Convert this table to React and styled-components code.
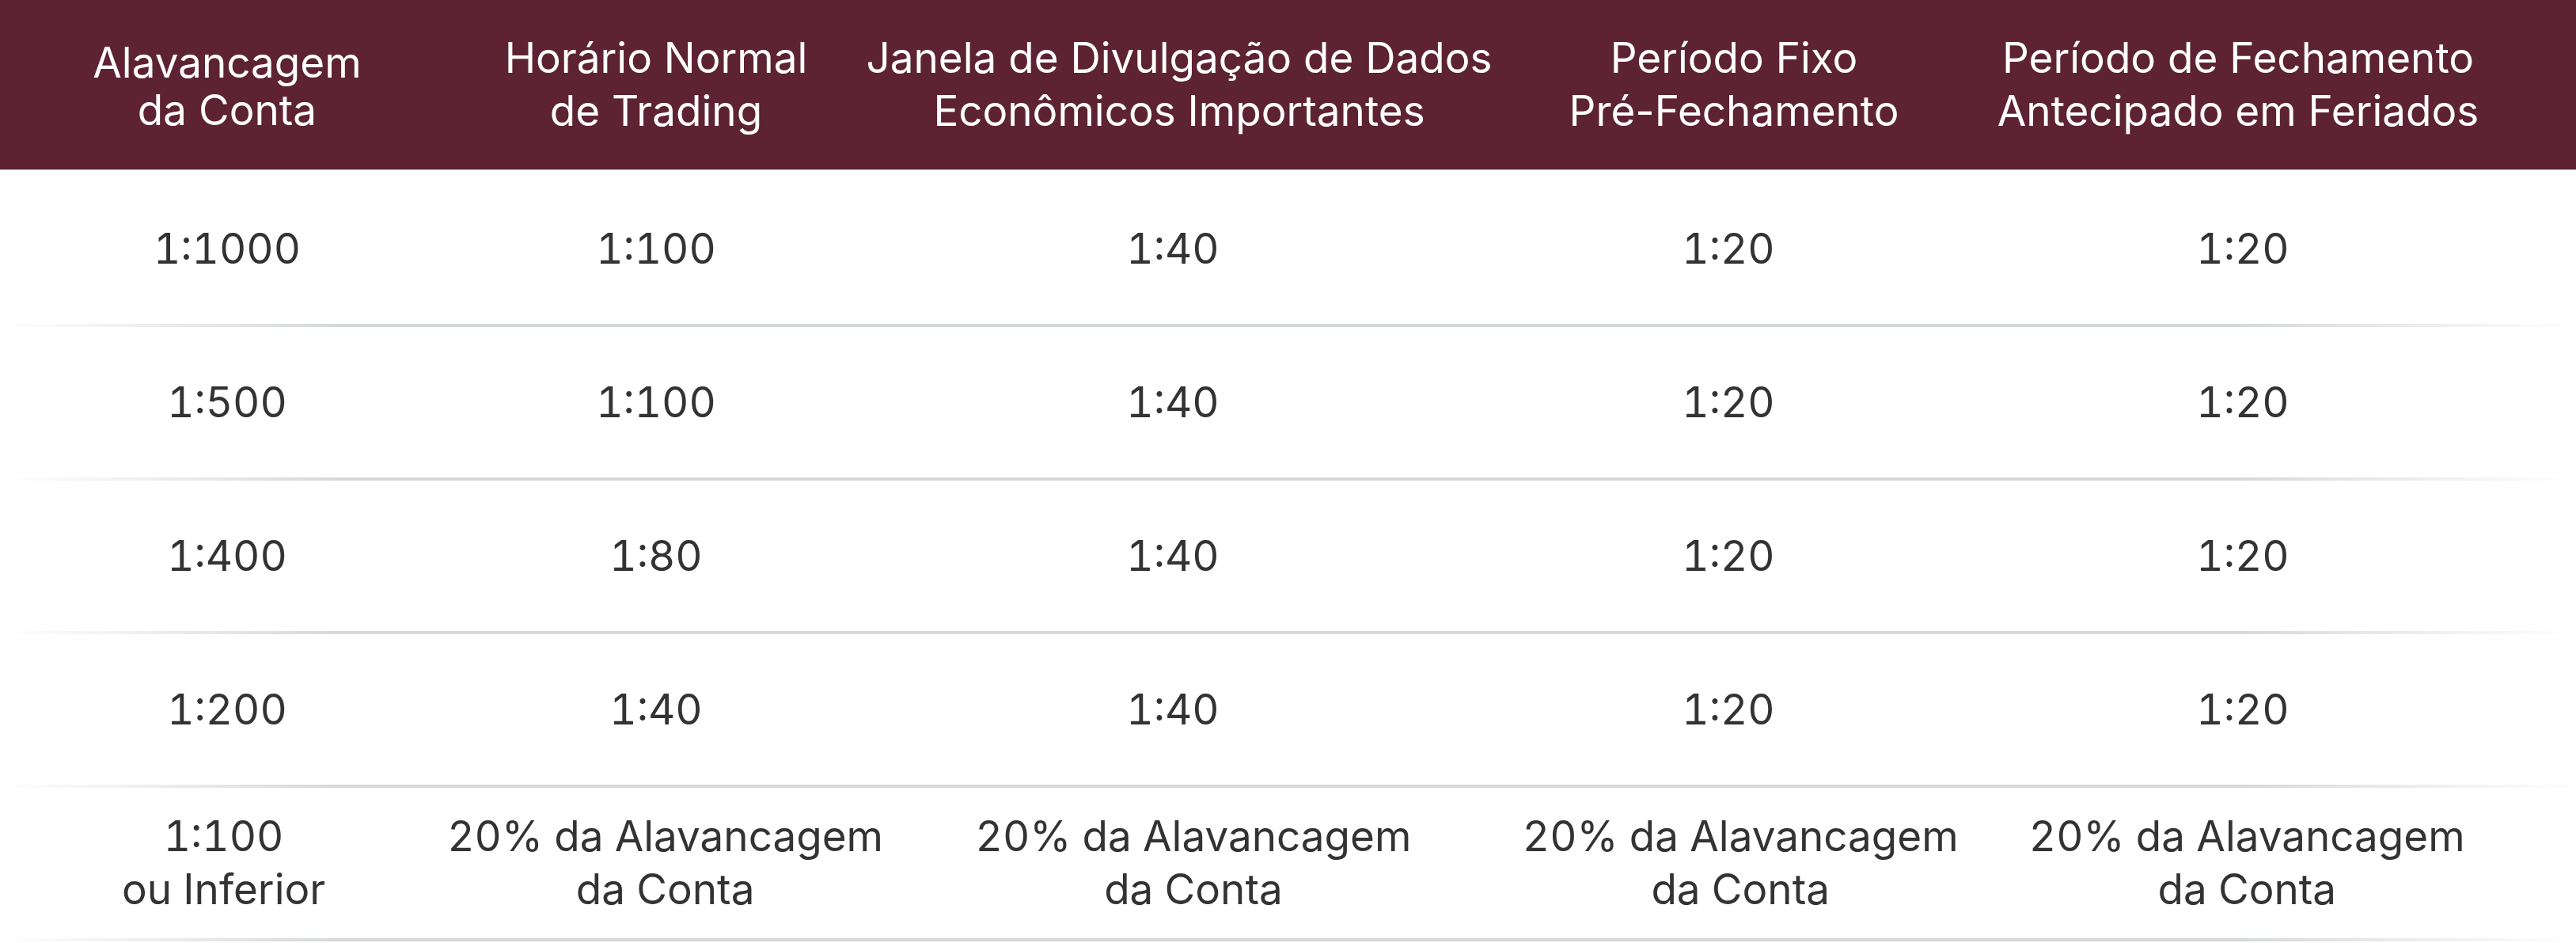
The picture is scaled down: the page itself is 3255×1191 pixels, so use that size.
import React from 'react';
import styled, { createGlobalStyle } from 'styled-components';

const GlobalStyle = createGlobalStyle`
  html, body {
    margin: 0;
    padding: 0;
    background: #ffffff;
  }
  body {
    font-family: Inter, "Noto Sans", "Liberation Sans", sans-serif;
  }
`;

const columns = [
  { title: ['Alavancagem', 'da Conta'], tight: true },
  { title: ['Horário Normal', 'de Trading'] },
  { title: ['Janela de Divulgação de Dados', 'Econômicos Importantes'] },
  { title: ['Período Fixo', 'Pré-Fechamento'] },
  { title: ['Período de Fechamento', 'Antecipado em Feriados'] },
];

const share = ['20% da Alavancagem', 'da Conta'];

const rows = [
  [['1:1000'], ['1:100'], ['1:40'], ['1:20'], ['1:20']],
  [['1:500'], ['1:100'], ['1:40'], ['1:20'], ['1:20']],
  [['1:400'], ['1:80'], ['1:40'], ['1:20'], ['1:20']],
  [['1:200'], ['1:40'], ['1:40'], ['1:20'], ['1:20']],
  [['1:100', 'ou Inferior'], share, share, share, share],
];

const App = () => {
  return (
    <>
      <GlobalStyle />
      <LeverageTable>
        <HeaderRow>
          {columns.map((col, i) => (
            <HeaderCell key={i} $tight={col.tight}>
              {col.title.map((line, j) => (
                <Line key={j}>{line}</Line>
              ))}
            </HeaderCell>
          ))}
        </HeaderRow>
        <TableBody>
          {rows.map((row, i) => (
            <BodyRow key={i}>
              {row.map((cell, j) => (
                <Cell key={j}>
                  {cell.map((line, k) => (
                    <Line key={k}>{line}</Line>
                  ))}
                </Cell>
              ))}
            </BodyRow>
          ))}
        </TableBody>
      </LeverageTable>
    </>
  );
};

const LeverageTable = styled.div`
  width: 3255px;
  display: flex;
  flex-direction: column;
`;

const HeaderRow = styled.div`
  display: grid;
  grid-template-columns: 574fr 510fr 812fr 590fr 684fr;
  padding-right: 85px;
  height: 215px;
  background-color: #5d2333;
  border-bottom: 1px solid #e3c9cf;
  box-sizing: border-box;
`;

const HeaderCell = styled.div`
  display: flex;
  flex-direction: column;
  align-items: center;
  justify-content: center;
  color: #ffffff;
  font-size: 53px;
  font-weight: 400;
  line-height: ${({ $tight }) => ($tight ? '60px' : '67px')};
  padding-top: ${({ $tight }) => ($tight ? '3px' : '0')};
  text-align: center;
  white-space: nowrap;
`;

const TableBody = styled.div`
  display: flex;
  flex-direction: column;
  padding-top: 4px;
`;

const BodyRow = styled.div`
  display: grid;
  grid-template-columns: 574fr 510fr 796fr 608fr 692fr;
  padding-right: 75px;
  height: 194px;
  box-sizing: border-box;
  padding-bottom: 4px;
  background-image: linear-gradient(
    90deg,
    rgba(214, 217, 218, 0) 0%,
    #d6d9da 13%,
    #d6d9da 87%,
    rgba(214, 217, 218, 0) 100%
  );
  background-repeat: no-repeat;
  background-position: left bottom;
  background-size: 100% 4px;
`;

const Cell = styled.div`
  display: flex;
  flex-direction: column;
  align-items: center;
  justify-content: center;
  color: #333333;
  font-size: 53px;
  line-height: 67px;
  font-variant-numeric: tabular-nums;
  text-align: center;
  white-space: nowrap;
`;

const Line = styled.span`
  display: block;
`;

export default App;
